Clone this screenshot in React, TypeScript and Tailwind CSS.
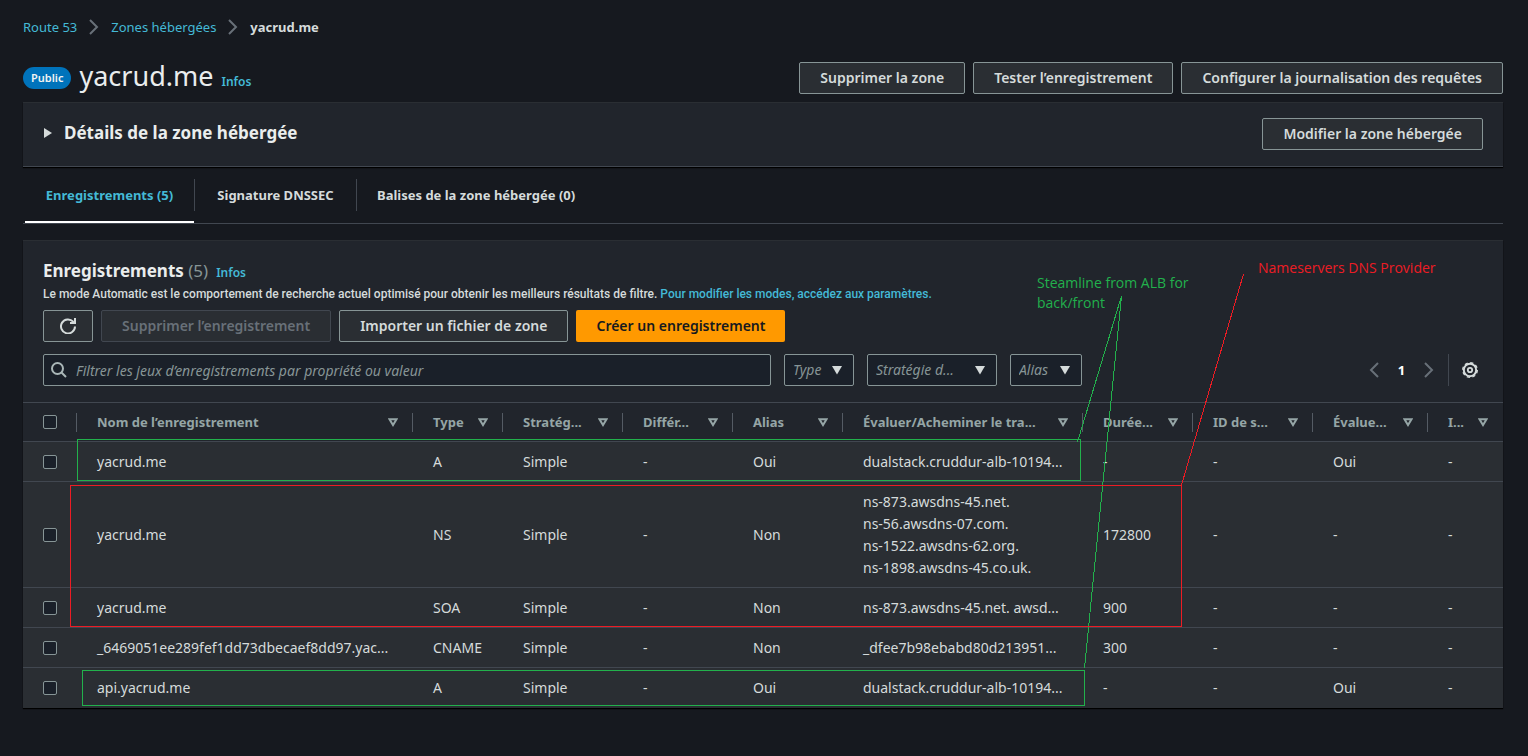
import type { ReactNode } from "react";

type Column = { label: string; width: string };

const columns: Column[] = [
  { label: "Nom de l’enregistrement", width: "w-[336px]" },
  { label: "Type", width: "w-[90px]" },
  { label: "Stratég...", width: "w-[120px]" },
  { label: "Différ...", width: "w-[110px]" },
  { label: "Alias", width: "w-[110px]" },
  { label: "Évaluer/Acheminer le tra...", width: "w-[240px]" },
  { label: "Durée...", width: "w-[110px]" },
  { label: "ID de s...", width: "w-[120px]" },
  { label: "Évalue...", width: "w-[115px]" },
  { label: "I...", width: "w-[75px]" },
];

const rows: (string | string[])[][] = [
  ["yacrud.me", "A", "Simple", "-", "Oui", "dualstack.cruddur-alb-10194...", "-", "-", "Oui", "-"],
  [
    "yacrud.me",
    "NS",
    "Simple",
    "-",
    "Non",
    ["ns-873.awsdns-45.net.", "ns-56.awsdns-07.com.", "ns-1522.awsdns-62.org.", "ns-1898.awsdns-45.co.uk."],
    "172800",
    "-",
    "-",
    "-",
  ],
  ["yacrud.me", "SOA", "Simple", "-", "Non", "ns-873.awsdns-45.net. awsd...", "900", "-", "-", "-"],
  ["_6469051ee289fef1dd73dbecaef8dd97.yac...", "CNAME", "Simple", "-", "Non", "_dfee7b98ebabd80d213951...", "300", "-", "-", "-"],
  ["api.yacrud.me", "A", "Simple", "-", "Oui", "dualstack.cruddur-alb-10194...", "-", "-", "Oui", "-"],
];

function Chevron({ left = false }: { left?: boolean }) {
  return (
    <svg width="10" height="16" viewBox="0 0 10 16" fill="none" stroke="#687078" strokeWidth="2" aria-hidden="true">
      <path d={left ? "M9 1 2 8l7 7" : "M1 1l7 7-7 7"} />
    </svg>
  );
}

function Button({ children, disabled = false }: { children: ReactNode; disabled?: boolean }) {
  return (
    <button
      type="button"
      disabled={disabled}
      className="h-8 rounded-xs border border-[#879596] bg-[#2a2e33] px-5 text-[14px] font-semibold whitespace-nowrap text-[#d5dbdb] disabled:border-[#414750] disabled:text-[#687078]"
    >
      {children}
    </button>
  );
}

function Filter({ label, width }: { label: string; width: string }) {
  return (
    <div className={`relative ${width}`}>
      <select
        aria-label={label}
        className="h-8 w-full appearance-none rounded-xs border border-[#879596] bg-[#1a2029] pl-2 text-[14px] text-[#879596] italic"
      >
        <option>{label}</option>
      </select>
      <svg className="pointer-events-none absolute top-[11px] right-3 text-[#d5dbdb]" width="10" height="10" viewBox="0 0 10 10" aria-hidden="true">
        <path d="M0 1h10L5 9.500z" fill="currentColor" />
      </svg>
    </div>
  );
}

function Checkbox({ label }: { label: string }) {
  return (
    <input
      type="checkbox"
      aria-label={label}
      className="ml-5 block size-[14px] appearance-none rounded-xs border border-[#879596] bg-[#1a2029] checked:bg-[#00a1c9]"
    />
  );
}

function Annotations() {
  return (
    <div className="pointer-events-none absolute inset-0 font-['Open_Sans',sans-serif] text-[14px] leading-5">
      <svg className="absolute -top-px left-0" width="1480" height="468" viewBox="23 240 1480 468" fill="none" shapeRendering="crispEdges" aria-hidden="true">
        <g stroke="#22b14c">
          <rect x="77.500" y="439.500" width="1003" height="41" />
          <rect x="82.500" y="670.500" width="1002" height="35" />
          <path d="M1121.500 296 1077.500 442M1121.500 296 1084.500 668" />
        </g>
        <g stroke="#ed1c24">
          <rect x="70.500" y="485.500" width="1111" height="141" />
          <path d="M1243.500 274 1181.500 485" />
        </g>
      </svg>
      <p className="absolute top-8 left-[1014px] w-[170px] text-[#22b14c]">
        Steamline from ALB for
        <br />
        back/front
      </p>
      <p className="absolute top-[17px] left-[1235px] whitespace-nowrap text-[#ed1c24]">Nameservers DNS Provider</p>
    </div>
  );
}

export default function App() {
  return (
    <main className="min-h-screen bg-[#16191f] pr-[25px] pb-12 pl-[23px] font-['Noto_Sans',sans-serif] text-[13px] leading-[22px] text-[#d5dbdb]">
      <nav aria-label="Fil d’Ariane" className="flex items-center gap-3 pt-4">
        <a href="#route53" className="text-[#44b9d6]">Route 53</a>
        <Chevron />
        <a href="#zones" className="text-[#44b9d6]">Zones hébergées</a>
        <Chevron />
        <span className="font-bold">yacrud.me</span>
      </nav>

      <header className="mt-4 flex h-12 items-start justify-between pt-1">
        <div className="flex items-center">
          <span className="mt-1 h-[22px] rounded-full bg-[#0073bb] px-2 text-[11px] font-semibold text-[#f2f3f3]">Public</span>
          <div className="ml-2 flex items-baseline gap-2">
            <h1 className="text-[27px] leading-9 text-[#eaeded]">yacrud.me</h1>
            <a href="#infos-zone" className="text-[12px] font-semibold text-[#44b9d6]">Infos</a>
          </div>
        </div>
        <div className="flex gap-2 pt-1">
          <Button>Supprimer la zone</Button>
          <Button>Tester l’enregistrement</Button>
          <Button>Configurer la journalisation des requêtes</Button>
        </div>
      </header>

      <section className="flex h-[65px] items-start justify-between border-t border-b border-t-[#2a2e33] border-b-[#414750] bg-[#21252c] px-5 pt-[15px] shadow-[0_1px_1px_#000]">
        <button type="button" className="flex h-[30px] items-center gap-3 text-[17px] font-bold text-[#eaeded]">
          <svg width="9" height="10" viewBox="0 0 9 10" aria-hidden="true">
            <path d="M1 0v10l8-5z" fill="#d5dbdb" />
          </svg>
          Détails de la zone hébergée
        </button>
        <Button>Modifier la zone hébergée</Button>
      </section>

      <div role="tablist" className="flex h-[57px] border-b border-[#414750] font-bold">
        <button type="button" role="tab" aria-selected="true" className="ml-[2px] w-[169px] border-y-2 border-t-transparent border-b-white text-[#44b9d6]">
          Enregistrements (5)
        </button>
        <button type="button" role="tab" aria-selected="false" className="my-3 w-[163px] border-x border-[#414750]">
          Signature DNSSEC
        </button>
        <button type="button" role="tab" aria-selected="false" className="px-5">
          Balises de la zone hébergée (0)
        </button>
      </div>

      <section className="relative mt-4 border-t border-[#2a2e33] bg-[#21252c] shadow-[0_1px_1px_#000]">
        <div className="px-5 pt-[18px] pb-4">
          <div className="flex items-baseline">
            <h2 className="text-[17px] leading-6 font-bold text-[#eaeded]">
              Enregistrements <span className="font-normal text-[#879596]">(5)</span>
            </h2>
            <a href="#infos" className="ml-2 text-[12px] font-semibold text-[#44b9d6]">Infos</a>
          </div>
          <p className="font-[Roboto,sans-serif] text-[12px] leading-5 font-medium">
            Le mode Automatic est le comportement de recherche actuel optimisé pour obtenir les meilleurs résultats de filtre.{" "}
            <a href="#parametres" className="text-[#44b9d6]">Pour modifier les modes, accédez aux paramètres.</a>
          </p>
          <div className="mt-[6px] flex gap-2">
            <button type="button" aria-label="Actualiser" className="flex h-8 w-[50px] items-center justify-center rounded-xs border border-[#879596] bg-[#2a2e33]">
              <svg width="16" height="16" viewBox="0 0 16 16" fill="none" stroke="#d5dbdb" strokeWidth="2" aria-hidden="true">
                <path d="M15 8.500A7 7 0 1 1 13.200 3.700L14.800 5M15 0v5h-5" />
              </svg>
            </button>
            <Button disabled>Supprimer l’enregistrement</Button>
            <Button>Importer un fichier de zone</Button>
            <button type="button" className="h-8 rounded-xs bg-[#ff9900] px-5 text-[14px] font-semibold whitespace-nowrap text-[#16191f]">
              Créer un enregistrement
            </button>
          </div>
          <div className="mt-3 flex items-center gap-[13px]">
            <div className="relative max-w-[728px] flex-1">
              <svg className="absolute top-2 left-2" width="16" height="16" viewBox="0 0 16 16" fill="none" stroke="#aab7b8" strokeWidth="2" aria-hidden="true">
                <circle cx="6.500" cy="6.500" r="5.500" />
                <path d="m10.500 10.500 4.500 4.500" />
              </svg>
              <input
                type="search"
                aria-label="Filtrer les enregistrements"
                placeholder="Filtrer les jeux d’enregistrements par propriété ou valeur"
                className="block h-8 w-full rounded-xs border border-[#879596] bg-[#1a2029] pl-8 text-[14px] placeholder:text-[#879596] placeholder:italic"
              />
            </div>
            <Filter label="Type" width="w-[70px]" />
            <Filter label="Stratégie d..." width="w-[130px]" />
            <Filter label="Alias" width="w-[72px]" />
            <div className="ml-auto flex h-8 items-center">
              <button type="button" aria-label="Page précédente"><Chevron left /></button>
              <span className="w-[45px] text-center font-bold text-white">1</span>
              <button type="button" aria-label="Page suivante"><Chevron /></button>
              <button type="button" aria-label="Préférences" className="ml-[14px] flex h-8 items-center border-l border-[#414750] pr-[5px] pl-[13px]">
                <svg width="16" height="16" viewBox="0 0 16 16" fill="none" stroke="#d5dbdb" strokeWidth="2" aria-hidden="true">
                  <circle cx="8" cy="8" r="6.200" />
                  <circle cx="8" cy="8" r="7.300" strokeWidth="1.400" strokeDasharray="3.200 2.533" />
                  <circle cx="8" cy="8" r="2.200" strokeWidth="1.800" />
                </svg>
              </button>
            </div>
          </div>
        </div>

        <table className="w-full table-fixed border-collapse text-left">
          <colgroup>
            <col className="w-[54px]" />
            {columns.map((c) => (
              <col key={c.label} className={c.width} />
            ))}
          </colgroup>
          <thead>
            <tr className="h-[39px] border-y border-[#414750] text-[#95a5a6]">
              <th className="p-0"><Checkbox label="Tout sélectionner" /></th>
              {columns.map((c) => (
                <th key={c.label} className="p-0">
                  <div className="-ml-px flex h-[19px] items-center justify-between border-l border-[#545b64] pr-[15px] pl-5 whitespace-nowrap">
                    {c.label}
                    <svg width="10" height="9" viewBox="0 0 10 9" fill="none" stroke="currentColor" strokeWidth="2" aria-hidden="true">
                      <path d="M1.500 1.200h7L5 7z" />
                    </svg>
                  </div>
                </th>
              ))}
            </tr>
          </thead>
          <tbody className="bg-[#2a2e33] text-[14px]">
            {rows.map((row, i) => (
              <tr key={i} className="border-b border-[#414750] last:border-[#2a2e33]">
                <td className="p-0"><Checkbox label={`Sélectionner ${row[0]}`} /></td>
                {row.map((cell, j) => (
                  <td key={j} className="pt-[9px] pr-0 pb-2 pl-5 whitespace-nowrap">
                    {Array.isArray(cell) ? cell.map((line) => <div key={line}>{line}</div>) : cell}
                  </td>
                ))}
              </tr>
            ))}
          </tbody>
        </table>
        <Annotations />
      </section>
    </main>
  );
}
